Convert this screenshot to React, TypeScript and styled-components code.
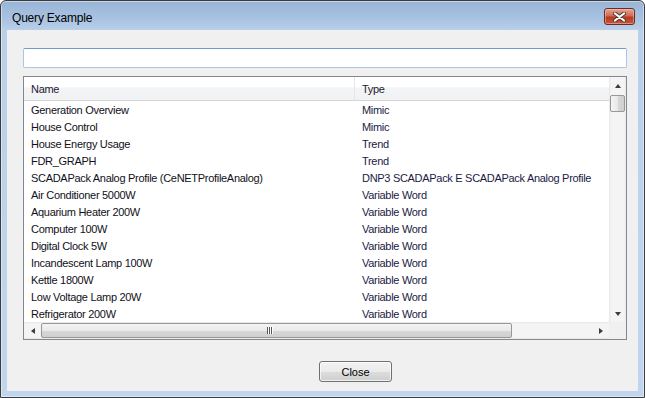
import React from "react";
import styled, { createGlobalStyle } from "styled-components";

const GlobalStyle = createGlobalStyle`
	html, body {
		margin: 0;
		padding: 0;
		background: #ffffff;
	}
	body {
		font-family: "Liberation Sans", Arial, sans-serif;
		font-size: 11px;
	}
`;

interface Item {
	name: string;
	type: string;
}

const items: Item[] = [
	{ name: "Generation Overview", type: "Mimic" },
	{ name: "House Control", type: "Mimic" },
	{ name: "House Energy Usage", type: "Trend" },
	{ name: "FDR_GRAPH", type: "Trend" },
	{ name: "SCADAPack Analog Profile (CeNETProfileAnalog)", type: "DNP3 SCADAPack E SCADAPack Analog Profile" },
	{ name: "Air Conditioner 5000W", type: "Variable Word" },
	{ name: "Aquarium Heater 200W", type: "Variable Word" },
	{ name: "Computer 100W", type: "Variable Word" },
	{ name: "Digital Clock 5W", type: "Variable Word" },
	{ name: "Incandescent Lamp 100W", type: "Variable Word" },
	{ name: "Kettle 1800W", type: "Variable Word" },
	{ name: "Low Voltage Lamp 20W", type: "Variable Word" },
	{ name: "Refrigerator 200W", type: "Variable Word" },
];

const App: React.FC = () => {
	return (
		<>
			<GlobalStyle />
			<Window>
				<TitleBar>
					<Title>Query Example</Title>
					<CaptionClose aria-label="Close">
						<svg width="13" height="10" viewBox="0 0 13 10">
							<path d="M2 1.5 L11 8.5 M11 1.5 L2 8.5" stroke="#4d3a36" strokeWidth="4" strokeLinecap="round" />
							<path d="M2 1.5 L11 8.5 M11 1.5 L2 8.5" stroke="#ffffff" strokeWidth="2.2" strokeLinecap="round" />
						</svg>
					</CaptionClose>
				</TitleBar>

				<Client>
					<SearchBox type="text" />

					<ListBox>
						<ListArea>
							<Header>
								<HeaderCell $first>Name</HeaderCell>
								<HeaderCell>Type</HeaderCell>
							</Header>
							{items.map((item) => (
								<Row key={item.name}>
									<Cell>{item.name}</Cell>
									<Cell $type>{item.type}</Cell>
								</Row>
							))}
						</ListArea>

						<VScroll>
							<ScrollButton>
								<Arrow $dir="up" />
							</ScrollButton>
							<VTrack>
								<VThumb />
							</VTrack>
							<ScrollButton>
								<Arrow $dir="down" />
							</ScrollButton>
						</VScroll>

						<HScroll>
							<ScrollButton>
								<Arrow $dir="left" />
							</ScrollButton>
							<HTrack>
								<HThumb>
									<Grip>
										<span />
										<span />
										<span />
									</Grip>
								</HThumb>
							</HTrack>
							<ScrollButton>
								<Arrow $dir="right" />
							</ScrollButton>
						</HScroll>

						<Corner />
					</ListBox>

					<Footer>
						<Button>Close</Button>
					</Footer>
				</Client>
			</Window>
		</>
	);
};

// WINDOW FRAME
const Window = styled.div`
	box-sizing: border-box;
	width: 645px;
	height: 398px;
	display: flex;
	flex-direction: column;
	border: 1px solid #3c3c3c;
	border-radius: 6px 6px 0 0;
	background: linear-gradient(180deg, #98b4d6 0px, #a9c3e2 18px, #bad0ea 30px, #c1d6ee 100%);
	box-shadow: inset 0 0 0 1px rgba(255, 255, 255, 0.45);
	padding: 0 6px 6px 6px;
	overflow: hidden;
`;

const TitleBar = styled.div`
	height: 29px;
	display: flex;
	align-items: center;
	justify-content: space-between;
	padding: 0 3px 0 5px;
`;

const Title = styled.div`
	font-family: "Liberation Sans", Arial, sans-serif;
	font-size: 12px;
	letter-spacing: -0.2px;
	color: #000;
	padding-top: 4px;
`;

const CaptionClose = styled.div`
	box-sizing: border-box;
	width: 31px;
	height: 17px;
	margin-top: 2px;
	display: flex;
	align-items: center;
	justify-content: center;
	border: 1px solid #6b2a22;
	border-radius: 3px;
	background: linear-gradient(180deg, #e4a596 0%, #cf6b55 45%, #b73a22 55%, #c8563c 100%);
	box-shadow: inset 0 0 0 1px rgba(255, 210, 200, 0.45);
`;

const Client = styled.div`
	flex: 1;
	display: flex;
	flex-direction: column;
	background: #f0f0f0;
	padding: 18px 11px 0 16px;
`;

const SearchBox = styled.input`
	box-sizing: border-box;
	height: 20px;
	width: 100%;
	margin: 0;
	border: 1px solid #a9c6e6;
	border-top-color: #6f9ccd;
	border-radius: 2px;
	background: #fff;
	outline: none;
	font-family: "Liberation Sans", Arial, sans-serif;
	font-size: 11px;
`;

// LIST VIEW
const ListBox = styled.div`
	box-sizing: border-box;
	margin-top: 8px;
	height: 264px;
	border: 1px solid #828790;
	background: #fff;
	display: grid;
	grid-template-columns: 1fr 17px;
	grid-template-rows: 1fr 17px;
	overflow: hidden;
	letter-spacing: -0.3px;
`;

const ListArea = styled.div`
	overflow: hidden;
	background: #fff;
`;

const Header = styled.div`
	box-sizing: border-box;
	height: 24px;
	display: grid;
	grid-template-columns: 331px 1fr;
	background: linear-gradient(180deg, #ffffff 0%, #ffffff 45%, #f3f4f6 46%, #f1f2f4 100%);
	border-bottom: 1px solid #d5d5d5;
`;

const HeaderCell = styled.div<{ $first?: boolean }>`
	display: flex;
	align-items: center;
	padding-left: 7px;
	padding-top: 1px;
	color: #1e2030;
	border-right: ${(p) => (p.$first ? "1px solid #e3e5e8" : "none")};
	white-space: nowrap;
`;

const Row = styled.div`
	height: 17px;
	display: grid;
	grid-template-columns: 331px 1fr;
	align-items: center;
`;

const Cell = styled.div<{ $type?: boolean }>`
	padding-left: 7px;
	color: ${(p) => (p.$type ? "#1a1a44" : "#101018")};
	white-space: nowrap;
	overflow: hidden;
`;

// SCROLLBARS
const VScroll = styled.div`
	display: flex;
	flex-direction: column;
	background: linear-gradient(90deg, #e6e6e6 0px, #f4f4f4 2px, #f4f4f4 15px, #e9e9e9 17px);
`;

const HScroll = styled.div`
	display: flex;
	background: linear-gradient(180deg, #e6e6e6 0px, #f4f4f4 2px, #f4f4f4 15px, #e9e9e9 17px);
`;

const ScrollButton = styled.div`
	flex: 0 0 17px;
	height: 17px;
	display: flex;
	align-items: center;
	justify-content: center;
`;

const arrowBorders: Record<string, string> = {
	up: "border-left: 3.5px solid transparent; border-right: 3.5px solid transparent; border-bottom: 4px solid #3c3c3c;",
	down: "border-left: 3.5px solid transparent; border-right: 3.5px solid transparent; border-top: 4px solid #3c3c3c;",
	left: "border-top: 3.5px solid transparent; border-bottom: 3.5px solid transparent; border-right: 4px solid #3c3c3c;",
	right: "border-top: 3.5px solid transparent; border-bottom: 3.5px solid transparent; border-left: 4px solid #3c3c3c;",
};

const Arrow = styled.div<{ $dir: "up" | "down" | "left" | "right" }>`
	width: 0;
	height: 0;
	${(p) => arrowBorders[p.$dir]}
`;

const VTrack = styled.div`
	flex: 1;
	display: flex;
	flex-direction: column;
	align-items: center;
`;

const HTrack = styled.div`
	flex: 1;
	display: flex;
	align-items: center;
`;

const VThumb = styled.div`
	box-sizing: border-box;
	width: 15px;
	height: 17px;
	margin-top: 1px;
	border: 1px solid #979797;
	border-radius: 2px;
	background: linear-gradient(90deg, #f4f4f4 0%, #e9e9e9 50%, #d8d8d8 51%, #cfcfcf 100%);
`;

const HThumb = styled.div`
	box-sizing: border-box;
	width: 471px;
	height: 15px;
	display: flex;
	align-items: center;
	justify-content: center;
	border: 1px solid #979797;
	border-radius: 2px;
	background: linear-gradient(180deg, #f4f4f4 0%, #e9e9e9 50%, #d8d8d8 51%, #cfcfcf 100%);
`;

const Grip = styled.div`
	display: flex;
	gap: 1px;
	margin-left: -14px;

	span {
		width: 1px;
		height: 7px;
		background: #555;
		box-shadow: 1px 0 0 #fff;
	}
`;

const Corner = styled.div`
	background: #f0f0f0;
`;

// FOOTER
const Footer = styled.div`
	display: flex;
	padding: 21px 0 0 296px;
`;

const Button = styled.button`
	box-sizing: border-box;
	width: 73px;
	height: 21px;
	padding: 0;
	border: 1px solid #707070;
	border-radius: 3px;
	background: linear-gradient(180deg, #f2f2f2 0%, #ebebeb 50%, #dddddd 51%, #cfcfcf 100%);
	box-shadow: inset 0 0 0 1px rgba(255, 255, 255, 0.7);
	font-family: "Liberation Sans", Arial, sans-serif;
	font-size: 11px;
	color: #000;
`;

export default App;
